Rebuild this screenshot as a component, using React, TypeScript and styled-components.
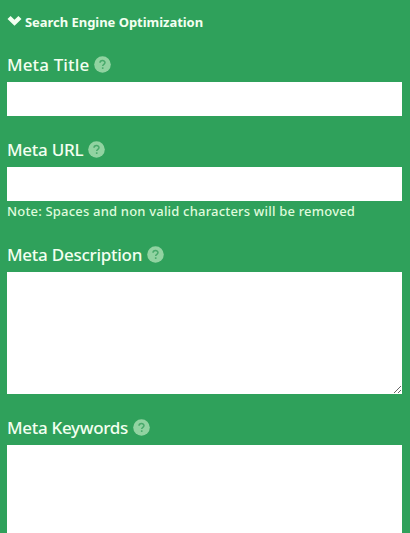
import React from "react";
import styled, { createGlobalStyle } from "styled-components";

const GlobalStyle = createGlobalStyle`
  *, *::before, *::after { box-sizing: border-box; }
  html, body { margin: 0; background: #2fa15b; }
  body { height: 533px; overflow: hidden; }
`;

const Panel = styled.main`
  height: 533px;
  overflow: hidden;
  padding: 13px 8px 0 7px;
  background: #2fa15b;
  color: #f3fff0;
  font-family: "Trebuchet MS", "Noto Sans", sans-serif;
`;

const SectionHeader = styled.header`
  display: flex;
  align-items: center;
  gap: 3px;
  height: 18px;
  margin-bottom: 23px;
`;

const Chevron = styled.svg`
  flex: none;
  width: 15px;
  height: 12px;
  margin-top: -2px;
`;

const SectionTitle = styled.h2`
  margin: 0;
  font-size: 13px;
  line-height: 18px;
  font-weight: 700;
  letter-spacing: -0.04px;
  white-space: nowrap;
`;

const Field = styled.section<{ $gap: number }>`
  display: flex;
  flex-direction: column;
  margin-bottom: ${({ $gap }) => $gap}px;
`;

const LabelRow = styled.div`
  display: flex;
  align-items: center;
  gap: 5px;
  height: 22px;
  margin-bottom: 6px;
`;

const Label = styled.label<{ $spacing: number }>`
  font-size: 17px;
  line-height: 22px;
  font-weight: 500;
  letter-spacing: ${({ $spacing }) => $spacing}px;
  white-space: nowrap;
`;

const HelpBadge = styled.svg`
  flex: none;
  width: 17px;
  height: 17px;
  margin-top: -1px;
`;

const Input = styled.input`
  width: 100%;
  height: 34px;
  padding: 6px;
  border: 0;
  border-radius: 0;
  outline: 0;
  background: #fff;
`;

const TextArea = styled.textarea`
  display: block;
  width: 100%;
  height: 122px;
  padding: 6px;
  border: 0;
  border-radius: 0;
  outline: 0;
  resize: vertical;
  background: #fff;
`;

const Note = styled.p`
  margin: 0;
  height: 21px;
  font-size: 13px;
  line-height: 20px;
  font-weight: 500;
  letter-spacing: 0.19px;
  color: #dffbdc;
  white-space: nowrap;
`;

function Help() {
  return (
    <HelpBadge viewBox="0 0 17 17" role="img" aria-label="Help">
      <circle cx="8.5" cy="8.5" r="8.3" fill="#91d3a1" />
      <path
        d="M6 6.8C6 3.9 11 3.9 11 6.6C11 8.4 8.7 8.2 8.7 10.1"
        fill="none"
        stroke="#48a96b"
        strokeWidth="1.5"
      />
      <rect x="7.9" y="11.3" width="1.6" height="1.6" fill="#48a96b" />
    </HelpBadge>
  );
}

interface FieldLabelProps {
  id: string;
  text: string;
  spacing: number;
}

function FieldLabel({ id, text, spacing }: FieldLabelProps) {
  return (
    <LabelRow>
      <Label htmlFor={id} $spacing={spacing}>{text}</Label>
      <Help />
    </LabelRow>
  );
}

export default function App() {
  return (
    <>
      <GlobalStyle />
      <Panel>
        <SectionHeader>
          <Chevron viewBox="0 0 15 12" aria-hidden="true">
            <path d="M0.5 4L3.6 0.9L7.5 4.8L11.4 0.9L14.5 4L7.5 10.8Z" fill="#f3fff0" />
          </Chevron>
          <SectionTitle>Search Engine Optimization</SectionTitle>
        </SectionHeader>
        <Field $gap={23}>
          <FieldLabel id="meta-title" text="Meta Title" spacing={0.13} />
          <Input id="meta-title" />
        </Field>
        <Field $gap={22}>
          <FieldLabel id="meta-url" text="Meta URL" spacing={-0.27} />
          <Input id="meta-url" />
          <Note>Note: Spaces and non valid characters will be removed</Note>
        </Field>
        <Field $gap={23}>
          <FieldLabel id="meta-description" text="Meta Description" spacing={-0.26} />
          <TextArea id="meta-description" />
        </Field>
        <Field $gap={0}>
          <FieldLabel id="meta-keywords" text="Meta Keywords" spacing={-0.3} />
          <TextArea id="meta-keywords" />
        </Field>
      </Panel>
    </>
  );
}
